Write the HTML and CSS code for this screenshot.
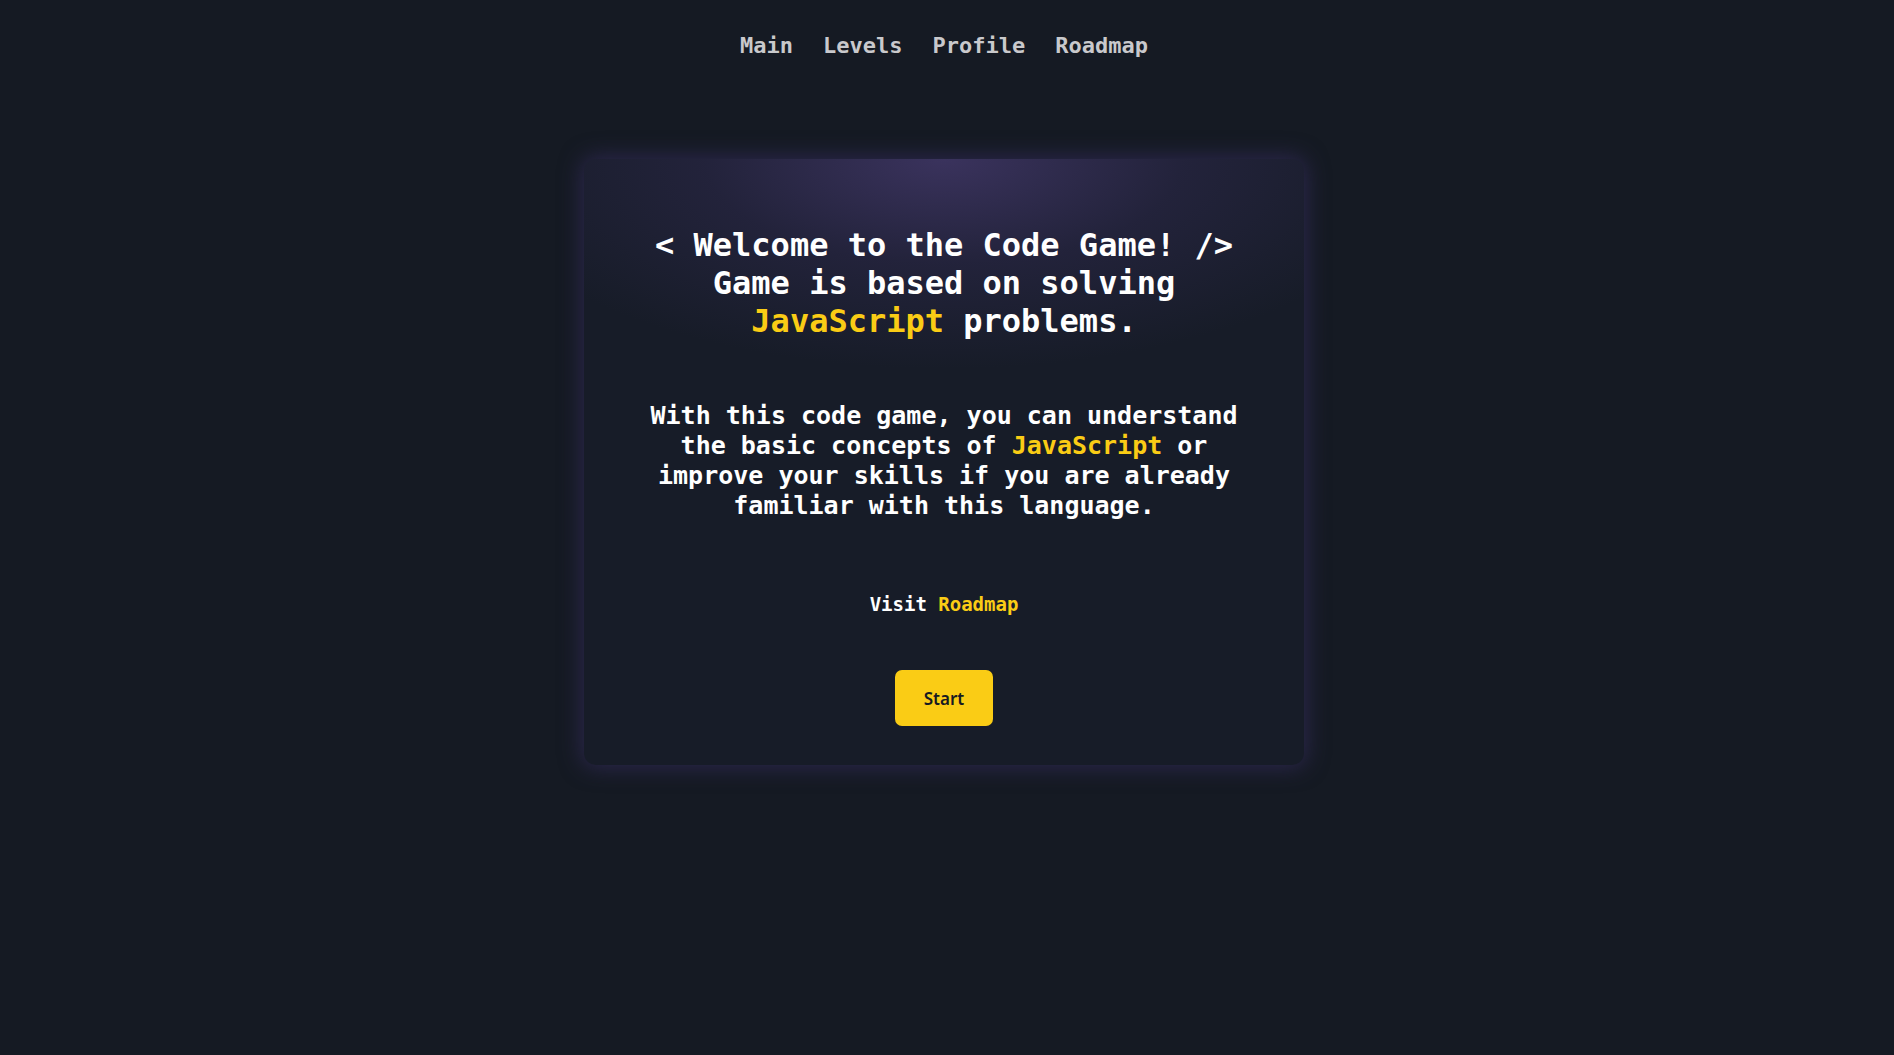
FILE: index.html
```html
<!DOCTYPE html>
<html lang="en">
<head>
<meta charset="utf-8">
<title>Code Game</title>
<link rel="stylesheet" href="styles.css">
</head>
<body>
<div class="page">
  <nav class="nav">
    <a class="nav-link" href="#">Main</a>
    <a class="nav-link" href="#">Levels</a>
    <a class="nav-link" href="#">Profile</a>
    <a class="nav-link" href="#">Roadmap</a>
  </nav>
  <main class="card">
    <h1 class="title">&lt; Welcome to the Code Game! /&gt;<br>Game is based on solving <span class="accent">JavaScript</span> problems.</h1>
    <p class="intro">With this code game, you can understand the basic concepts of <span class="accent">JavaScript</span> or improve your skills if you are already familiar with this language.</p>
    <p class="visit">Visit <a class="accent link" href="#">Roadmap</a></p>
    <button class="start">Start</button>
  </main>
</div>
</body>
</html>
```

FILE: styles.css
```css
html, body {
  margin: 0;
  padding: 0;
  background: #151a23;
}
body {
  font-family: "DejaVu Sans Mono", monospace;
  color: #ffffff;
  min-height: 1055px;
}
.page {
  display: flex;
  flex-direction: column;
  align-items: center;
  padding-right: 6px;
}
.nav {
  display: flex;
  gap: 30px;
  padding-top: 31px;
  height: 30px;
}
.nav-link {
  font-size: 22px;
  line-height: 30px;
  font-weight: bold;
  color: #c9c9cc;
  text-decoration: none;
}
.card {
  margin-top: 98px;
  width: 600px;
  padding: 67px 60px 39px;
  border-radius: 12px;
  background:
    radial-gradient(ellipse 480px 210px at 50% 0%, rgba(60, 52, 96, 0.95), rgba(44, 40, 74, 0.55) 50%, rgba(23, 28, 40, 0) 100%),
    #171c28;
  box-shadow: 0 0 22px 2px rgba(52, 44, 92, 0.75);
  display: flex;
  flex-direction: column;
  align-items: center;
  text-align: center;
}
.title {
  margin: 0;
  font-size: 32px;
  line-height: 38px;
  font-weight: bold;
}
.accent {
  color: #facc15;
}
.intro {
  margin: 61px 0 0;
  font-size: 25px;
  line-height: 30px;
  font-weight: bold;
}
.visit {
  margin: 71px 0 0;
  font-size: 19px;
  line-height: 24px;
  font-weight: bold;
}
.link {
  text-decoration: none;
}
.start {
  margin-top: 54px;
  width: 98px;
  height: 56px;
  border: none;
  border-radius: 7px;
  background: #facc15;
  color: #161a22;
  font-family: "Noto Sans", sans-serif;
  font-size: 17px;
  font-weight: 600;
  cursor: pointer;
}
```
